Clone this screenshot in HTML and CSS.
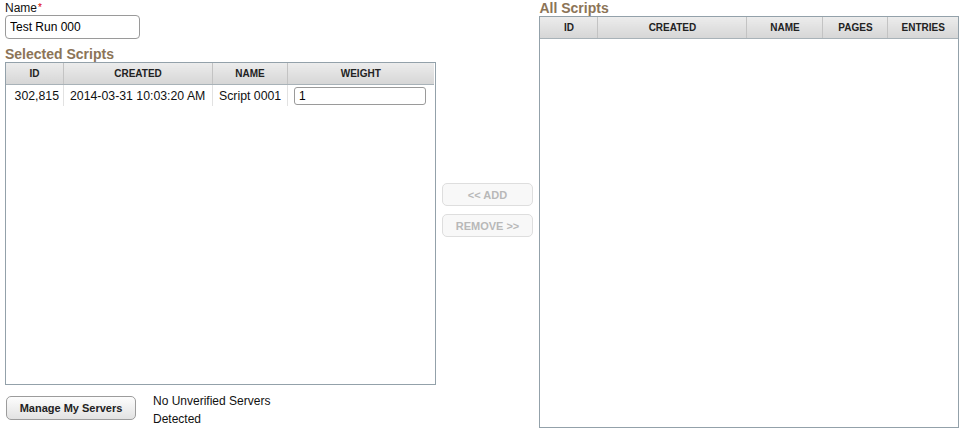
FILE: index.html
```html
<!DOCTYPE html>
<html lang="en">
<head>
    <meta charset="UTF-8">
    <title>Test Run</title>
    <link rel="stylesheet" href="styles.css">
</head>
<body>
    <div class="layout">
        <!-- Left column -->
        <div class="left-col">
            <label class="field-label">Name<span class="req">*</span></label>
            <input type="text" class="name-input" value="Test Run 000">
            <h3 class="section-title">Selected Scripts</h3>
            <div class="grid selected-grid">
                <table>
                    <thead>
                        <tr>
                            <th class="c-id">ID</th>
                            <th class="c-created">CREATED</th>
                            <th class="c-name">NAME</th>
                            <th class="c-weight">WEIGHT</th>
                        </tr>
                    </thead>
                    <tbody>
                        <tr>
                            <td class="num">302,815</td>
                            <td>2014-03-31 10:03:20 AM</td>
                            <td>Script 0001</td>
                            <td><input type="text" class="weight-input" value="1"></td>
                        </tr>
                    </tbody>
                </table>
            </div>
            <div class="servers-row">
                <button class="manage-btn">Manage My Servers</button>
                <div class="servers-note">No Unverified Servers<br>Detected</div>
            </div>
        </div>

        <!-- Move buttons -->
        <div class="mid-col">
            <button class="move-btn" disabled>&lt;&lt; ADD</button>
            <button class="move-btn" disabled>REMOVE &gt;&gt;</button>
        </div>

        <!-- Right column -->
        <div class="right-col">
            <h3 class="section-title top">All Scripts</h3>
            <div class="grid all-grid">
                <table>
                    <thead>
                        <tr>
                            <th class="c-id">ID</th>
                            <th class="c-created">CREATED</th>
                            <th class="c-name2">NAME</th>
                            <th class="c-pages">PAGES</th>
                            <th>ENTRIES</th>
                        </tr>
                    </thead>
                    <tbody></tbody>
                </table>
            </div>
        </div>
    </div>
</body>
</html>
```

FILE: styles.css
```css
body {
    margin: 0;
    padding: 0;
    font-family: "Liberation Sans", Arial, sans-serif;
    font-size: 12px;
    color: #111;
    background: #fff;
}

.layout {
    display: flex;
    padding: 0 8px 0 5px;
}

/* Left column */
.left-col {
    width: 431px;
    display: flex;
    flex-direction: column;
}

.field-label {
    display: block;
    margin-top: 1px;
    line-height: 14px;
    font-size: 12px;
}

.req {
    color: #d00;
    font-size: 10px;
    vertical-align: top;
    margin-left: 1px;
}

.name-input {
    box-sizing: border-box;
    width: 135px;
    height: 24px;
    padding: 2px 4px;
    font-family: inherit;
    font-size: 12px;
    border: 1px solid #9a9a9a;
    border-radius: 4px;
    margin: 0;
}

.section-title {
    margin: 7px 0 0 0;
    font-size: 14px;
    line-height: 16px;
    font-weight: bold;
    color: #8c7457;
}

.section-title.top {
    margin-top: 0;
}

/* Grids */
.grid {
    border: 1px solid #93a1aa;
    background: #fff;
    box-sizing: border-box;
}

.selected-grid {
    height: 323px;
    padding-right: 1px;
}

.grid table {
    width: 100%;
    border-collapse: collapse;
    table-layout: fixed;
}

.grid th {
    height: 21px;
    padding: 0;
    font-size: 10px;
    font-weight: bold;
    color: #222;
    background: linear-gradient(#ececec, #d6d6d6);
    border-right: 1px solid #c3c3c3;
    border-bottom: 1px solid #a8b2b8;
    text-align: center;
}

.grid th:last-child {
    border-right: none;
}

.c-id { width: 57px; }
.c-created { width: 148px; }
.c-name { width: 74px; }
.c-name2 { width: 75px; }
.c-pages { width: 64px; }

.grid td {
    height: 21px;
    padding: 0 6px;
    font-size: 12.3px;
    border-right: 1px solid #e2e2e2;
    white-space: nowrap;
}

.grid td.num {
    padding: 0 4px;
    text-align: right;
}

.grid td:last-child {
    border-right: none;
}

.weight-input {
    box-sizing: border-box;
    width: 132px;
    height: 18px;
    padding: 0 4px;
    font-family: inherit;
    font-size: 12px;
    border: 1px solid #9a9a9a;
    border-radius: 3px;
    margin: 0;
    vertical-align: middle;
}

/* Servers row */
.servers-row {
    display: flex;
    align-items: flex-start;
    margin-top: 7px;
}

.manage-btn {
    width: 130px;
    height: 24px;
    margin: 4px 17px 0 1px;
    font-family: inherit;
    font-size: 11px;
    font-weight: bold;
    color: #222;
    background: linear-gradient(#fdfdfd, #e2e2e2);
    border: 1px solid #9c9c9c;
    border-radius: 5px;
    padding: 0;
}

.servers-note {
    line-height: 18px;
    font-size: 12px;
}

/* Move buttons */
.mid-col {
    width: 104px;
    display: flex;
    flex-direction: column;
    align-items: center;
    padding-top: 183px;
    gap: 8px;
}

.move-btn {
    width: 91px;
    height: 23px;
    padding: 0;
    font-family: inherit;
    font-size: 11px;
    font-weight: bold;
    color: #b8b8b8;
    background: #f8f8f8;
    border: 1px solid #dedede;
    border-radius: 5px;
}

/* Right column */
.right-col {
    width: 420px;
    display: flex;
    flex-direction: column;
}

.all-grid {
    height: 412px;
}
```
